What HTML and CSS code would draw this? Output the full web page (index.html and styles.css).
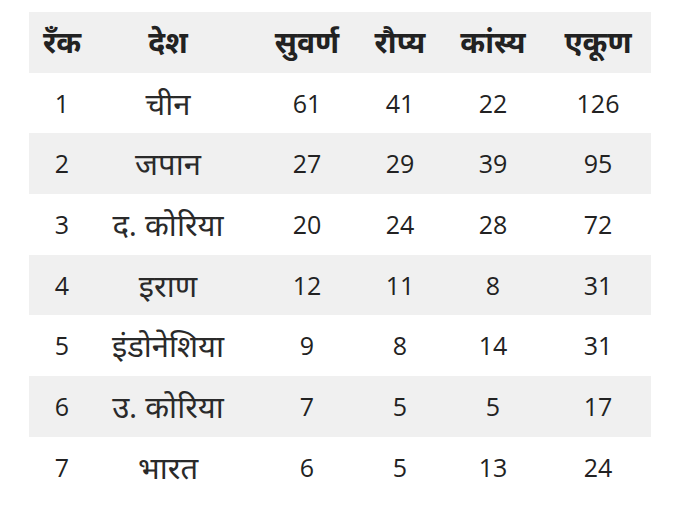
FILE: index.html
```html
<!DOCTYPE html>
<html lang="hi">
<head>
<meta charset="utf-8">
<link rel="stylesheet" href="styles.css">
</head>
<body>
<div class="table">
  <div class="row head"><span>रँक</span><span>देश</span><span>सुवर्ण</span><span>रौप्य</span><span>कांस्य</span><span>एकूण</span></div>
  <div class="row"><span>1</span><span class="name">चीन</span><span>61</span><span>41</span><span>22</span><span>126</span></div>
  <div class="row alt"><span>2</span><span class="name">जपान</span><span>27</span><span>29</span><span>39</span><span>95</span></div>
  <div class="row"><span>3</span><span class="name">द. कोरिया</span><span>20</span><span>24</span><span>28</span><span>72</span></div>
  <div class="row alt"><span>4</span><span class="name">इराण</span><span>12</span><span>11</span><span>8</span><span>31</span></div>
  <div class="row"><span>5</span><span class="name">इंडोनेशिया</span><span>9</span><span>8</span><span>14</span><span>31</span></div>
  <div class="row alt"><span>6</span><span class="name">उ. कोरिया</span><span>7</span><span>5</span><span>5</span><span>17</span></div>
  <div class="row"><span>7</span><span class="name">भारत</span><span>6</span><span>5</span><span>13</span><span>24</span></div>
</div>
</body>
</html>
```
FILE: styles.css
```css
html, body {
  margin: 0;
  padding: 0;
  background: #ffffff;
}
body {
  padding: 12px 0 0 29px;
  font-family: "Open Sans", "Noto Sans Devanagari", "Noto Sans", sans-serif;
  color: #222222;
}
.table {
  width: 622px;
}
.row {
  display: grid;
  grid-template-columns: 66px 146px 132px 54px 132px 78px;
  height: 60.7px;
  align-items: center;
  font-size: 25px;
  line-height: 1;
}
.row span {
  text-align: center;
  white-space: nowrap;
}
.row .name {
  font-size: 31px;
  color: #2a2a2a;
}
.head, .alt {
  background: #f0f0f0;
}
.head {
  font-weight: 700;
  font-size: 30px;
}
```
